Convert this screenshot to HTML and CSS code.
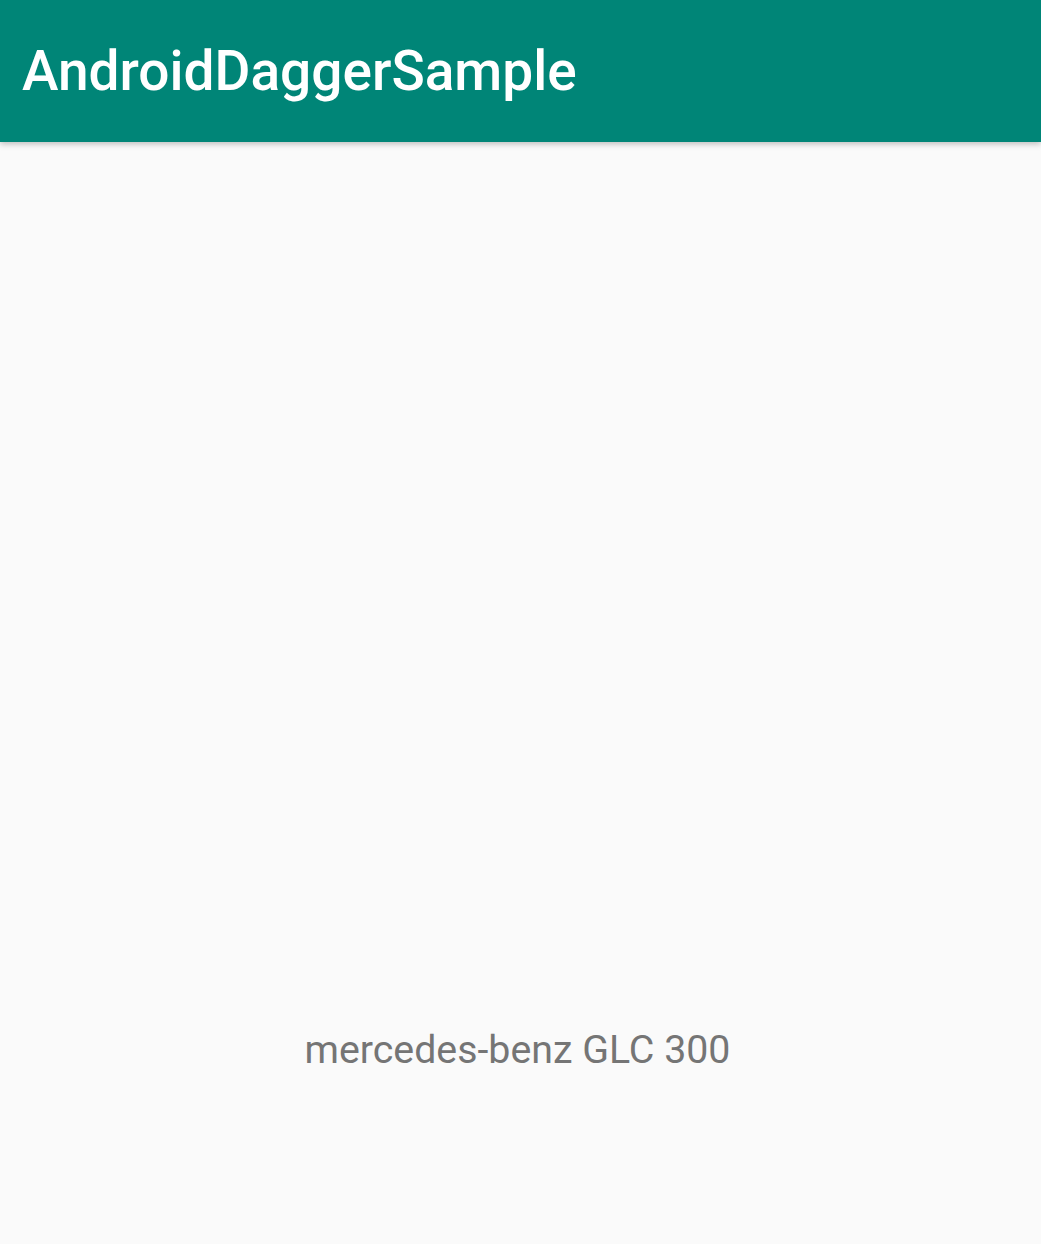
FILE: index.html
```html
<!DOCTYPE html>
<html lang="en">
<head>
    <meta charset="UTF-8">
    <meta name="viewport" content="width=device-width, initial-scale=1.0">
    <title>AndroidDaggerSample</title>
    <link rel="stylesheet" href="styles.css">
</head>
<body>
    <header class="app-bar">
        <h1 class="app-title">AndroidDaggerSample</h1>
    </header>
    <main class="content">
        <p class="car-name">mercedes-benz GLC 300</p>
    </main>
</body>
</html>
```

FILE: styles.css
```css
body {
    font-family: Roboto, "Noto Sans", sans-serif;
    background-color: #fafafa;
    margin: 0;
    padding: 0;
    height: 100vh;
    overflow: hidden;
    display: flex;
    flex-direction: column;
}

.app-bar {
    height: 142px;
    background-color: #008577;
    box-shadow: 0 2px 6px rgba(0, 0, 0, 0.25);
    display: flex;
    align-items: center;
    padding: 0 22px;
    position: relative;
    z-index: 1;
}

.app-title {
    margin: 0;
    color: #fff;
    font-size: 55px;
    font-weight: 500;
}

.content {
    flex: 1;
    display: flex;
    flex-direction: column;
    align-items: center;
}

.car-name {
    margin: 885px 0 0;
    padding-right: 6px;
    color: #757575;
    font-size: 39.3px;
    line-height: 1.2;
}
```
